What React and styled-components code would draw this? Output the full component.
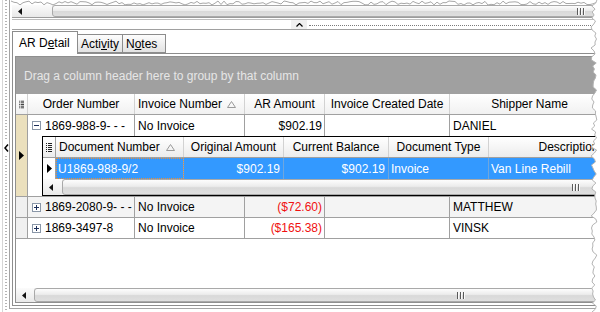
import React from 'react';
import styled, { createGlobalStyle } from 'styled-components';

const GlobalStyle = createGlobalStyle`
  html, body {
    margin: 0;
    padding: 0;
    background: #fff;
  }
  body {
    font-family: "Liberation Sans", Arial, sans-serif;
    font-size: 12px;
    color: #000;
    overflow: hidden;
  }
`;

const Page = styled.div`
  position: relative;
  width: 600px;
  height: 312px;
  display: flex;
  background: #fff;
  overflow: hidden;
`;

const Rail = styled.div`
  flex-shrink: 0;
  width: 7px;
  height: 312px;
  margin-left: 2px;
  border-left: 1px solid #d6d6d6;
  background: repeating-linear-gradient(to bottom, #b4b4b4 0 1px, transparent 1px 3px) 2px 0 / 2px 100% no-repeat;
  display: flex;
  flex-direction: column;
  align-items: center;
  justify-content: center;
  padding-bottom: 16px;
  box-sizing: border-box;
`;

const RailKnob = styled.div`
  width: 7px;
  padding: 3px 0;
  background: #fff;
  display: flex;
  justify-content: center;
`;

const Frame = styled.div`
  flex-shrink: 0;
  width: 620px;
  height: 309px;
  box-sizing: border-box;
  border-left: 1px solid #a4a4a4;
  border-bottom: 1px solid #a4a4a4;
  padding: 5px 0 2px 2px;
  display: flex;
  flex-direction: column;
`;

const Track = styled.div`
  flex-shrink: 0;
  display: flex;
  height: ${(p) => p.$h}px;
  background: #f1f1f1;
  box-sizing: border-box;
`;

const TrackArrow = styled.div`
  flex-shrink: 0;
  width: ${(p) => p.$w}px;
  display: flex;
  align-items: center;
  padding-left: 6px;
  box-sizing: border-box;
  background: linear-gradient(#fbfbfb, #e9e9e9);
`;

const Thumb = styled.div`
  flex: 1;
  display: flex;
  align-items: center;
  padding-left: ${(p) => p.$grip}px;
  border: 1px solid #a9a9a9;
  border-radius: 3px;
  background: linear-gradient(#fdfdfd, #ececec 45%, #d9d9d9 55%, #dfdfdf);
`;

const Divider = styled.div`
  flex-shrink: 0;
  height: 3px;
  box-sizing: border-box;
  border-top: 1px solid #9c9c9c;
  border-bottom: 1px solid #bdbdbd;
`;

const Splitter = styled.div`
  flex-shrink: 0;
  height: 10px;
  box-sizing: border-box;
  border-bottom: 1px solid #a0a0a0;
  display: flex;
  align-items: center;
  padding-left: 279px;
`;

const SplitterKnob = styled.div`
  width: 16px;
  height: 9px;
  display: flex;
  align-items: center;
  justify-content: center;
  background: #f0f0f0;
`;

const SplitterDots = styled.div`
  flex: 1;
  margin: 2px 0 0 2px;
  border-top: 1px dotted #7a7a7a;
`;

const TabStrip = styled.div`
  flex-shrink: 0;
  position: relative;
  z-index: 1;
  height: 22px;
  margin-top: 1px;
  display: flex;
  align-items: flex-end;
`;

const Tab = styled.div`
  width: ${(p) => p.$w}px;
  height: ${(p) => (p.$active ? 23 : 19)}px;
  margin-bottom: ${(p) => (p.$active ? -1 : 0)}px;
  padding-left: ${(p) => (p.$active ? 6 : 3)}px;
  box-sizing: border-box;
  border: 1px solid #8c8c8c;
  border-bottom: ${(p) => (p.$active ? 'none' : '1px solid #8c8c8c')};
  margin-left: ${(p) => (p.$active ? 0 : -0)}px;
  background: ${(p) => (p.$active ? '#fff' : 'linear-gradient(#fdfdfd, #e2e2e2)')};
  display: flex;
  align-items: center;
  white-space: nowrap;
  & + & {
    border-left: none;
  }
`;

const Mn = styled.span`
  text-decoration: underline;
`;

const TabPanel = styled.div`
  flex: 1;
  min-height: 0;
  display: flex;
  padding: 2px;
  box-sizing: border-box;
  border: 1px solid #8d8d8d;
`;

const Grid = styled.div`
  flex: 1;
  min-width: 0;
  display: flex;
  flex-direction: column;
  overflow: hidden;
  border: 1px solid #8f8f8f;
`;

const GroupPanel = styled.div`
  flex-shrink: 0;
  height: 37px;
  padding-left: 8px;
  display: flex;
  align-items: center;
  background: #a0a0a0;
  color: #e6e6e6;
  white-space: nowrap;
`;

const HeaderRow = styled.div`
  flex-shrink: 0;
  height: 21px;
  display: flex;
  box-sizing: border-box;
  border-bottom: 1px solid #a0a0a0;
  background: linear-gradient(#ffffff, #f1f1f1);
`;

const HeaderCell = styled.div`
  flex-shrink: 0;
  width: ${(p) => p.$w}px;
  box-sizing: border-box;
  border-right: 1px solid #d2d2d2;
  display: flex;
  align-items: center;
  justify-content: ${(p) => p.$align || 'center'};
  padding: 0 ${(p) => (p.$sort ? 8 : 3)}px 0 3px;
  white-space: nowrap;
  overflow: hidden;
`;

const SortMark = styled.span`
  margin-left: auto;
  display: flex;
`;

const DataRow = styled.div`
  flex-shrink: 0;
  height: 21px;
  display: flex;
  box-sizing: border-box;
  border-bottom: ${(p) => (p.$flat ? 'none' : '1px solid #a0a0a0')};
  background: ${(p) => p.$bg || '#fff'};
`;

const Cell = styled.div`
  flex-shrink: 0;
  width: ${(p) => p.$w}px;
  box-sizing: border-box;
  border-right: 1px solid #a0a0a0;
  display: flex;
  align-items: center;
  gap: 4px;
  justify-content: ${(p) => (p.$align === 'right' ? 'flex-end' : 'flex-start')};
  padding: 0 2px 0 ${(p) => (p.$tree ? 4 : 3)}px;
  color: ${(p) => (p.$neg ? '#f01010' : '#000')};
  white-space: nowrap;
  overflow: hidden;
`;

const IndicatorCell = styled.div`
  flex-shrink: 0;
  width: 12px;
  box-sizing: border-box;
  border-right: 1px solid #a0a0a0;
  background: ${(p) => p.$bg || '#f0f0f0'};
  display: flex;
  align-items: center;
  justify-content: center;
`;

const ExpandGroup = styled.div`
  flex-shrink: 0;
  display: flex;
  border-bottom: 1px solid #a0a0a0;
`;

const GroupBody = styled.div`
  flex: 1;
  min-width: 0;
  display: flex;
  flex-direction: column;
`;

const ChildArea = styled.div`
  display: flex;
  padding-left: 14px;
`;

const ChildGrid = styled.div`
  flex: 1;
  min-width: 0;
  height: 60px;
  box-sizing: border-box;
  border: 1px solid #000;
  display: flex;
  flex-direction: column;
  overflow: hidden;
`;

const ChildHeader = styled(HeaderRow)`
  background: linear-gradient(#ffffff, #ececec);
`;

const ChildRow = styled.div`
  flex-shrink: 0;
  height: 21px;
  display: flex;
  background: #3399ff;
  color: #fff;
`;

const ChildCell = styled.div`
  flex-shrink: 0;
  width: ${(p) => p.$w}px;
  box-sizing: border-box;
  border-right: 1px solid #6ea6de;
  display: flex;
  align-items: center;
  justify-content: ${(p) => (p.$align === 'right' ? 'flex-end' : 'flex-start')};
  padding: 0 3px 0 2px;
  white-space: nowrap;
  overflow: hidden;
  outline: ${(p) => (p.$focus ? '1px dotted #e8903c' : 'none')};
  outline-offset: -1px;
`;

const RowMarker = styled.div`
  flex-shrink: 0;
  width: 13px;
  box-sizing: border-box;
  border-right: 1px solid #a0a0a0;
  background: #fff;
  display: flex;
  align-items: center;
  justify-content: center;
`;

const EmptySpace = styled.div`
  flex: 1;
`;

const TornEdges = styled.svg`
  position: absolute;
  left: 0;
  top: 0;
  pointer-events: none;
`;

const ListIcon = () => (
  <svg width="6" height="9" viewBox="0 0 6 9">
    {[0, 2, 4, 6, 8].map((y) => (
      <g key={y} fill="#222">
        <rect x="0" y={y} width="1" height="1" />
        <rect x="2" y={y} width="4" height="1" />
      </g>
    ))}
  </svg>
);

const SortUp = () => (
  <svg width="9" height="7" viewBox="0 0 9 7">
    <path d="M0.5 6.5 L4.5 0.5 L8.5 6.5 Z" fill="none" stroke="#9a9a9a" />
  </svg>
);

const RightMark = () => (
  <svg width="5" height="9" viewBox="0 0 5 9">
    <polygon points="0,0 5,4.5 0,9" fill="#000" />
  </svg>
);

const LeftArrow = () => (
  <svg width="4" height="7" viewBox="0 0 4 7">
    <polygon points="4,0 0,3.5 4,7" fill="#111" />
  </svg>
);

const Grip = () => (
  <svg width="8" height="7" viewBox="0 0 8 7">
    {[0, 3, 6].map((x) => (
      <g key={x}>
        <rect x={x} y="0" width="1" height="7" fill="#5a5a5a" />
        <rect x={x + 1} y="0" width="1" height="7" fill="#fafafa" />
      </g>
    ))}
  </svg>
);

const TreeBox = ({ open }) => (
  <svg width="9" height="9" viewBox="0 0 9 9">
    <rect x="0.5" y="0.5" width="8" height="8" fill="#fff" stroke="#8a97a8" />
    <rect x="2" y="4" width="5" height="1" fill="#1c2f5a" />
    {!open && <rect x="4" y="2" width="1" height="5" fill="#1c2f5a" />}
  </svg>
);

const Caret = () => (
  <svg width="7" height="4" viewBox="0 0 7 4">
    <path d="M0.5 3.5 L3.5 0.5 L6.5 3.5" fill="none" stroke="#000" strokeWidth="1.2" />
  </svg>
);

const Chevron = () => (
  <svg width="5" height="8" viewBox="0 0 5 8">
    <path d="M4 0.5 L1 4 L4 7.5" fill="none" stroke="#000" strokeWidth="1.5" />
  </svg>
);

const ScrollBar = ({ h, arrow, grip }) => (
  <Track $h={h}>
    <TrackArrow $w={arrow}>
      <LeftArrow />
    </TrackArrow>
    <Thumb $grip={grip}>
      <Grip />
    </Thumb>
  </Track>
);

const columns = [
  { key: 'order', w: 107, label: 'Order Number' },
  { key: 'invoice', w: 110, label: 'Invoice Number', sort: true },
  { key: 'ar', w: 80, label: 'AR Amount', align: 'right' },
  { key: 'created', w: 125, label: 'Invoice Created Date' },
  { key: 'shipper', w: 160, label: 'Shipper Name' },
];

const childColumns = [
  { key: 'doc', w: 128, label: 'Document Number', sort: true },
  { key: 'orig', w: 100, label: 'Original Amount', align: 'right' },
  { key: 'bal', w: 105, label: 'Current Balance', align: 'right' },
  { key: 'type', w: 100, label: 'Document Type' },
  { key: 'desc', w: 160, label: 'Description' },
];

const orders = [
  { id: 1, order: '1869-988-9- - -', invoice: 'No Invoice', ar: '$902.19', created: '', shipper: 'DANIEL', open: true },
  { id: 2, order: '1869-2080-9- - -', invoice: 'No Invoice', ar: '($72.60)', neg: true, created: '', shipper: 'MATTHEW', bg: '#f4f4f4' },
  { id: 3, order: '1869-3497-8', invoice: 'No Invoice', ar: '($165.38)', neg: true, created: '', shipper: 'VINSK' },
];

const docs = [
  { doc: 'U1869-988-9/2', orig: '$902.19', bal: '$902.19', type: 'Invoice', desc: 'Van Line Rebill' },
];

const OrderCells = ({ row }) =>
  columns.map((c) => (
    <Cell key={c.key} $w={c.w} $align={c.align} $tree={c.key === 'order'} $neg={c.key === 'ar' && row.neg}>
      {c.key === 'order' && <TreeBox open={row.open} />}
      {row[c.key]}
    </Cell>
  ));

const rng = (seed) => {
  let s = seed;
  return () => {
    s = (s * 16807) % 2147483647;
    return s / 2147483647;
  };
};

const buildTorn = () => {
  const r = rng(1234);
  const top = [];
  for (let x = 11; x <= 597; x += 3) top.push([x, (1 + r() * 4).toFixed(1)]);
  const right = [];
  for (let y = 0; y <= 312; y += 3) right.push([(591 + r() * 6).toFixed(1), y]);
  return { top, right };
};

const torn = buildTorn();
const pts = (list) => list.map(([x, y]) => `${x},${y}`).join(' ');

export default function App() {
  return (
    <>
      <GlobalStyle />
      <Page>
        <Rail>
          <RailKnob>
            <Chevron />
          </RailKnob>
        </Rail>
        <Frame>
          <ScrollBar h={12} arrow={40} grip={524} />
          <Divider />
          <Splitter>
            <SplitterKnob>
              <Caret />
            </SplitterKnob>
            <SplitterDots />
          </Splitter>
          <TabStrip>
            <Tab $active $w={66}>
              AR D<Mn>e</Mn>tail
            </Tab>
            <Tab $w={45}>
              Acti<Mn>v</Mn>ity
            </Tab>
            <Tab $w={43}>
              N<Mn>o</Mn>tes
            </Tab>
          </TabStrip>
          <TabPanel>
            <Grid>
              <GroupPanel>Drag a column header here to group by that column</GroupPanel>
              <HeaderRow>
                <HeaderCell $w={12}>
                  <ListIcon />
                </HeaderCell>
                {columns.map((c) => (
                  <HeaderCell key={c.key} $w={c.w} $align={c.sort ? 'flex-start' : 'center'} $sort={c.sort}>
                    {c.label}
                    {c.sort && (
                      <SortMark>
                        <SortUp />
                      </SortMark>
                    )}
                  </HeaderCell>
                ))}
              </HeaderRow>
              {orders.map((row) =>
                row.open ? (
                  <ExpandGroup key={row.id}>
                    <IndicatorCell $bg="#ebe0bd">
                      <RightMark />
                    </IndicatorCell>
                    <GroupBody>
                      <DataRow $flat>
                        <OrderCells row={row} />
                      </DataRow>
                      <ChildArea>
                        <ChildGrid>
                          <ChildHeader>
                            <HeaderCell $w={13} style={{ borderRightColor: '#a0a0a0' }}>
                              <ListIcon />
                            </HeaderCell>
                            {childColumns.map((c) => (
                              <HeaderCell key={c.key} $w={c.w} $align={c.sort ? 'flex-start' : 'center'} $sort={c.sort}>
                                {c.label}
                                {c.sort && (
                                  <SortMark>
                                    <SortUp />
                                  </SortMark>
                                )}
                              </HeaderCell>
                            ))}
                          </ChildHeader>
                          {docs.map((d) => (
                            <ChildRow key={d.doc}>
                              <RowMarker>
                                <RightMark />
                              </RowMarker>
                              {childColumns.map((c, i) => (
                                <ChildCell key={c.key} $w={c.w} $align={c.align} $focus={i === 0}>
                                  {d[c.key]}
                                </ChildCell>
                              ))}
                            </ChildRow>
                          ))}
                          <ScrollBar h={16} arrow={19} grip={509} />
                        </ChildGrid>
                      </ChildArea>
                    </GroupBody>
                  </ExpandGroup>
                ) : (
                  <DataRow key={row.id} $bg={row.bg}>
                    <IndicatorCell />
                    <OrderCells row={row} />
                  </DataRow>
                )
              )}
              <EmptySpace />
              <ScrollBar h={14} arrow={18} grip={422} />
            </Grid>
          </TabPanel>
        </Frame>
        <TornEdges width="600" height="312" viewBox="0 0 600 312">
          <polygon points={`11,0 ${pts(torn.top)} 600,0`} fill="#fff" />
          <polyline points={pts(torn.top)} fill="none" stroke="#a8a8a8" />
          <polygon points={`${pts(torn.right)} 600,312 600,0`} fill="#fff" />
          <polyline points={pts(torn.right)} fill="none" stroke="#b4b4b4" />
        </TornEdges>
      </Page>
    </>
  );
}
